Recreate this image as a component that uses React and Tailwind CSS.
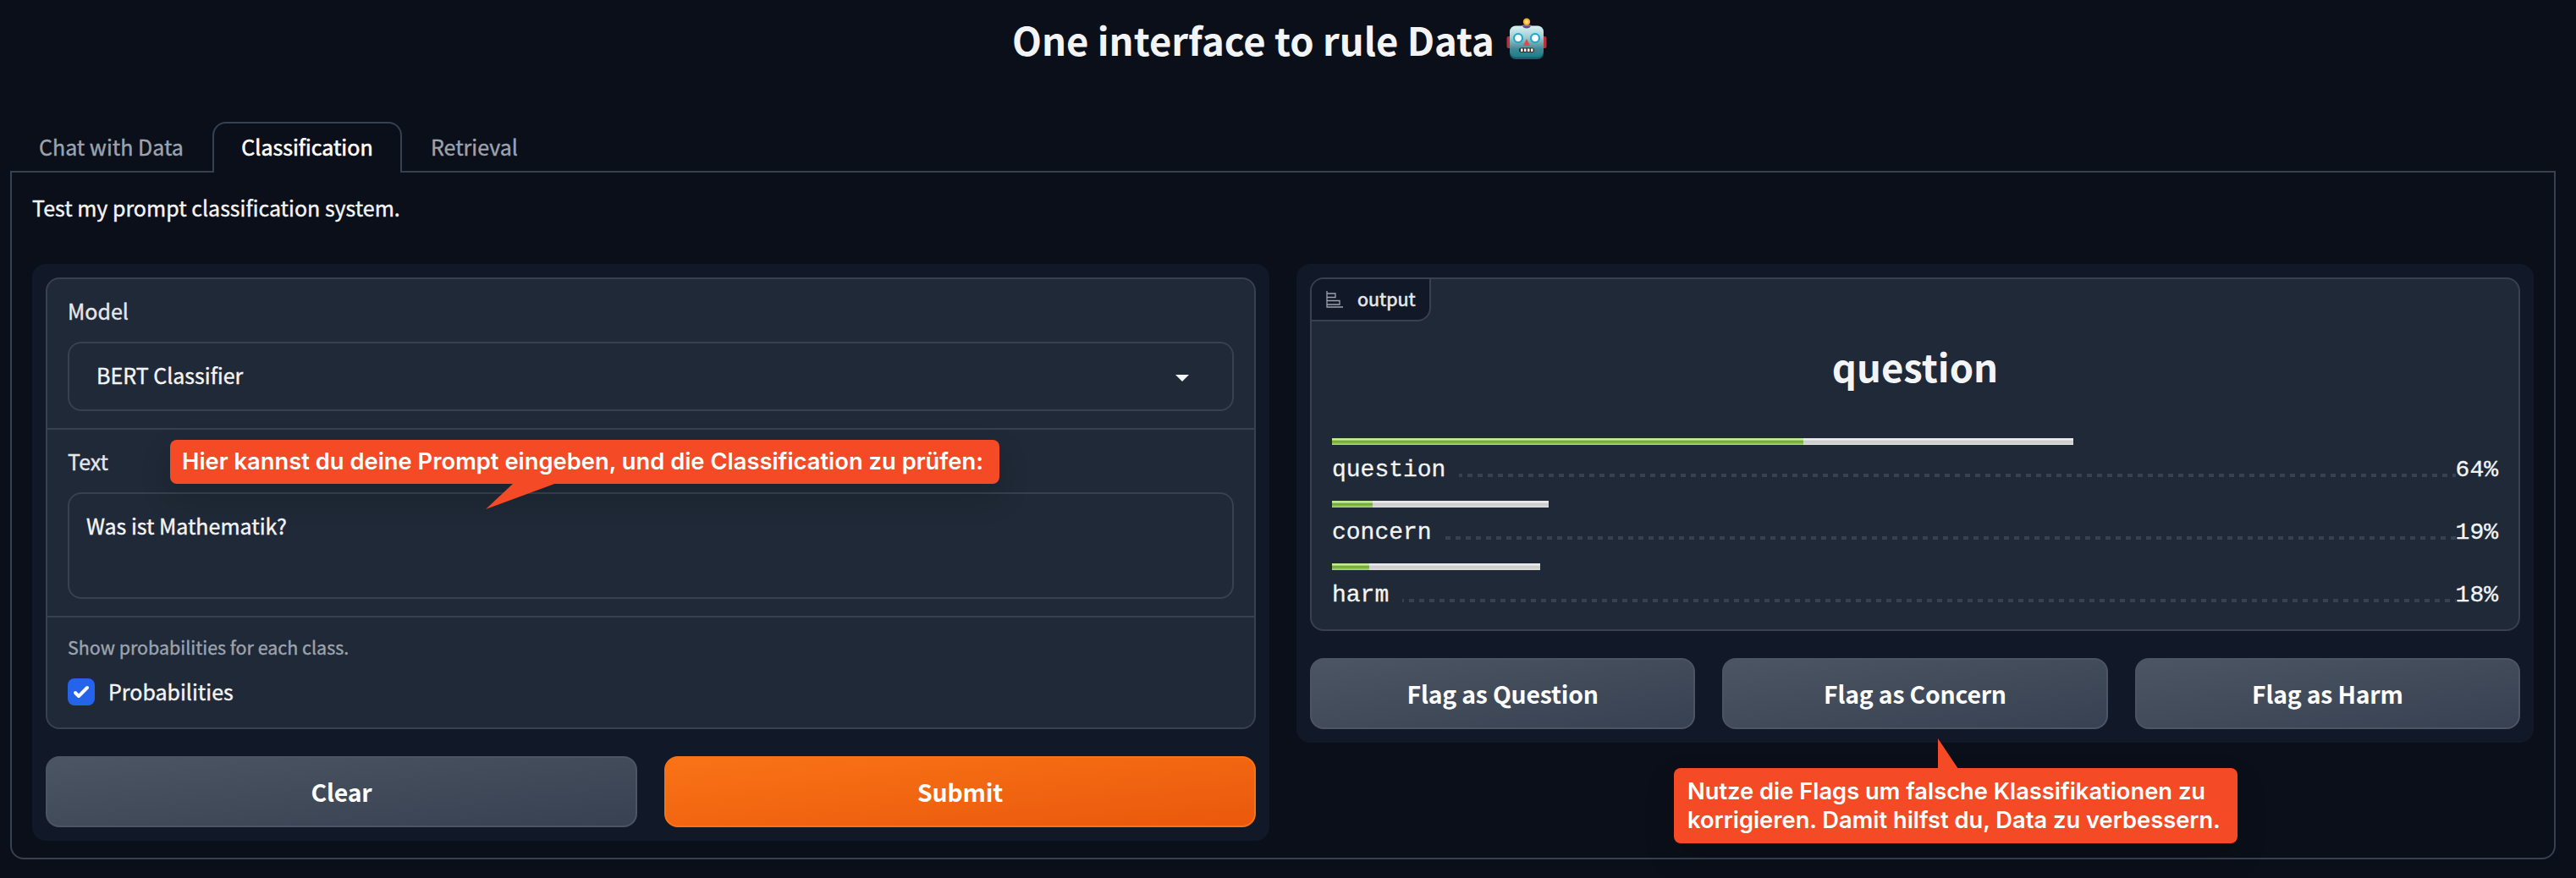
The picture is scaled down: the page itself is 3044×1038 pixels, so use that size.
const sans = "font-['Noto_Sans_CJK_SC','Noto_Sans',sans-serif]";

function Robot() {
  return (
    <svg className="-mt-px ml-[14px] h-[50px] w-[48px]" viewBox="0 0 48 50" aria-hidden="true">
      <defs>
        <linearGradient id="face" x1="0" y1="0" x2="0" y2="1">
          <stop offset="0" stopColor="#d9f3f2" />
          <stop offset="0.35" stopColor="#a3cfd2" />
          <stop offset="0.75" stopColor="#3f8795" />
          <stop offset="1" stopColor="#1f7d88" />
        </linearGradient>
        <radialGradient id="bulb">
          <stop offset="0" stopColor="#fff3a0" />
          <stop offset="1" stopColor="#f29a12" />
        </radialGradient>
      </defs>
      <rect x="0.500" y="22" width="6" height="14" rx="2" fill="#b8323a" />
      <rect x="41.500" y="22" width="6" height="14" rx="2" fill="#b8323a" />
      <ellipse cx="24" cy="10" rx="6" ry="3" fill="#5d4a86" />
      <circle cx="24" cy="4.800" r="4.200" fill="url(#bulb)" />
      <rect x="4" y="10" width="40" height="39" rx="7" fill="#17606c" />
      <rect x="4" y="9.500" width="40" height="37" rx="7" fill="url(#face)" />
      <path d="M19 9.500h10q-1 3-5 3t-5-3z" fill="#5d4a86" />
      <circle cx="14" cy="24" r="6" fill="#1aa5cf" />
      <circle cx="34" cy="24" r="6" fill="#1aa5cf" />
      <circle cx="14" cy="24" r="3.900" fill="#fff" />
      <circle cx="34" cy="24" r="3.900" fill="#fff" />
      <path d="M24 25 L28 33 H20 Z" fill="#e0484c" />
      <rect x="15" y="35.500" width="18" height="5.500" rx="2.500" fill="#3a2a2a" />
      <path d="M17 36.500h2.500v3.500H17zM21 36.500h2.500v3.500H21zM25 36.500h2.500v3.500H25zM29 36.500h2.500v3.500H29z" fill="#fff" />
    </svg>
  );
}

function Button({ children, primary }) {
  return (
    <button
      className={
        primary
          ? "h-[84px] flex-1 rounded-2xl border-2 border-[#f97316] bg-linear-to-br from-[#f97316] to-[#ea580c] text-[28.400px] leading-[80px] font-bold tracking-[-0.2px] text-white [-webkit-text-stroke:0]"
          : "h-[84px] flex-1 rounded-2xl border-2 border-[#4b5563] bg-linear-to-br from-[#4b5563] to-[#374151] text-[28.400px] leading-[80px] font-bold tracking-[-0.2px] text-white [-webkit-text-stroke:0]"
      }
    >
      {children}
    </button>
  );
}

const rows = [
  { label: "question", pct: 64, fill: 557, width: 876, dash: -2 },
  { label: "concern", pct: 19, fill: 48, width: 256, dash: 0 },
  { label: "harm", pct: 18, fill: 44, width: 246, dash: -4 },
];

function Row({ label, pct, fill, width, dash }) {
  return (
    <div className="h-[74px]">
      <div
        className="h-2 bg-[linear-gradient(to_bottom,#ddd,#eee_20%,#ccc_45%,#ccc_55%,#ddd)]"
        style={{ width }}
      >
        <div
          className="h-2 bg-[linear-gradient(to_bottom,#ad7,#cea_20%,#7a3_45%,#7a3_55%,#ad7)]"
          style={{ width: fill }}
        />
      </div>
      <div className="flex h-[42px] items-end font-['Liberation_Mono',monospace] text-[28px] leading-[24px] text-[#f3f4f6] [-webkit-text-stroke:0.3px]">
        <span>{label}</span>
        <span
          className="mb-1 ml-4 h-1 flex-1 bg-[linear-gradient(to_right,#374151_50%,transparent_50%)] bg-[length:12px_4px]"
          style={{ backgroundPositionX: dash }}
        />
        <span>{pct}%</span>
      </div>
    </div>
  );
}

export default function App() {
  return (
    <div className={`${sans} h-[1038px] w-[3044px] overflow-hidden bg-[#0b0f19] text-[25px] text-[#f3f4f6] [-webkit-text-stroke:0.4px]`}>
      <header className="flex h-[144px] w-[3024px] items-start justify-center pt-[22px]">
        <h1 className="-mt-0.5 text-[45.400px] leading-[52px] font-bold [-webkit-text-stroke:0]">One interface to rule Data</h1>
        <Robot />
      </header>

      <nav className="relative z-10 -mb-0.5 ml-3 flex h-[60px] leading-[58px] text-[#9ca3af]">
        <div className="w-[239px] pl-[34px]">Chat with Data</div>
        <div className="w-[224px] rounded-t-2xl border-2 border-b-0 border-[#374151] bg-[#0b0f19] text-center leading-[54px] text-white [-webkit-text-stroke:0.6px]">
          Classification
        </div>
        <div className="pl-[34px]">Retrieval</div>
      </nav>

      <main className="ml-3 h-[814px] w-[3008px] rounded-b-2xl border-2 border-[#374151] px-6">
        <p className="h-[108px] pt-[21px] leading-[40px]">Test my prompt classification system.</p>
        <div className="flex items-start gap-8">
          <section className="flex h-[682px] w-[1462px] flex-col gap-8 rounded-2xl bg-[#111827] p-4">
            <div className="h-[534px] rounded-2xl border-2 border-[#374151] bg-[#1f2937]">
              <div className="h-[178px] border-b-2 border-[#374151] px-6 pt-4">
                <div className="h-[58px] leading-[42px] text-[#e5e7eb]">Model</div>
                <div className="flex h-[82px] items-center justify-between rounded-2xl border-2 border-[#374151] pr-[51px] pl-8">
                  <span className="-mt-[3px]">BERT Classifier</span>
                  <svg className="mt-1 h-2 w-4" viewBox="0 0 16 8"><path d="M0 0H16L8 8Z" fill="#f3f4f6" /></svg>
                </div>
              </div>
              <div className="relative h-[222px] border-b-2 border-[#374151] px-6 pt-4">
                <div className="h-[58px] leading-[42px] text-[#e5e7eb]">Text</div>
                <div className="h-[126px] rounded-2xl border-2 border-[#374151] px-5 pt-4 leading-[42px]">
                  Was ist Mathematik?
                </div>
                <div className="absolute top-[12px] left-[145px] h-[52px] w-[980px] rounded-lg bg-[#f54a26] pl-[14px] font-['Inter',sans-serif] text-[27.350px] leading-[52px] font-semibold whitespace-nowrap text-white shadow-[0_16px_36px_rgba(0,0,0,0.15)] [-webkit-text-stroke:0]">
                  Hier kannst du deine Prompt eingeben, und die Classification zu prüfen:
                  <svg className="absolute top-[51px] left-[373px] h-[31px] w-[84px]" viewBox="0 0 84 31">
                    <path d="M33 0H84L0 31Z" fill="#f54a26" />
                  </svg>
                </div>
              </div>
              <div className="px-6 pt-[17px]">
                <div className="h-[53px] text-[21.450px] leading-[36px] text-[#9ca3af]">Show probabilities for each class.</div>
                <div className="mt-[2px] flex h-8 items-center gap-4">
                  <span className="flex size-8 items-center justify-center rounded-lg bg-[#2563eb]">
                    <svg className="size-8" viewBox="0 0 16 16" fill="white">
                      <path d="M12.207 4.793a1 1 0 010 1.414l-5 5a1 1 0 01-1.414 0l-2-2a1 1 0 011.414-1.414L6.500 9.086l4.293-4.293a1 1 0 011.414 0z" />
                    </svg>
                  </span>
                  <span className="-mt-0.5 leading-[36px]">Probabilities</span>
                </div>
              </div>
            </div>
            <div className="flex gap-8">
              <Button>Clear</Button>
              <Button primary>Submit</Button>
            </div>
          </section>

          <section className="relative flex h-[566px] w-[1462px] flex-col gap-8 rounded-2xl bg-[#111827] p-4">
            <div className="h-[418px] overflow-hidden rounded-2xl border-2 border-[#374151] bg-[#1f2937]">
              <div className="flex h-[50px] w-[141px] items-center rounded-br-2xl border-r-2 border-b-2 border-[#374151] bg-[#111827] pl-[17px] text-[21.500px] leading-[46px] text-[#e5e7eb] [-webkit-text-stroke:0.6px]">
                <svg className="mr-[17px] h-5 w-5 shrink-0" viewBox="0 0 20 20" fill="none" stroke="#9ca3af" strokeWidth="1.300">
                  <path d="M1 0V19H20M1 3H11V7.500H1M1 11.500H16V16H1" />
                </svg>
                <span className="-mt-0.5">output</span>
              </div>
              <div className="h-[138px] pt-[18px] text-center text-[45.400px] leading-[68px] font-bold [-webkit-text-stroke:0]">question</div>
              <div className="px-6">
                {rows.map((r) => (
                  <Row key={r.label} {...r} />
                ))}
              </div>
            </div>
            <div className="flex gap-8">
              <Button>Flag as Question</Button>
              <Button>Flag as Concern</Button>
              <Button>Flag as Harm</Button>
            </div>
            <div className="absolute top-[596px] left-[446px] h-[89px] w-[666px] rounded-lg bg-[#f54a26] pt-[11px] pl-4 font-['Inter',sans-serif] text-[27.300px] leading-[34px] font-semibold whitespace-nowrap text-white shadow-[0_16px_36px_rgba(0,0,0,0.15)] [-webkit-text-stroke:0]">
              <div>Nutze die Flags um falsche Klassifikationen zu</div>
              <div>korrigieren. Damit hilfst du, Data zu verbessern.</div>
              <svg className="absolute -top-[35px] left-[312px] h-9 w-6" viewBox="0 0 24 36">
                <path d="M0 0L24 36H0Z" fill="#f54a26" />
              </svg>
            </div>
          </section>
        </div>
      </main>
    </div>
  );
}
